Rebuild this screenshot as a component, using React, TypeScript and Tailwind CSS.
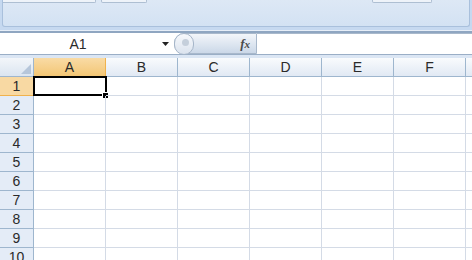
import React from "react";

const cols = ["A", "B", "C", "D", "E", "F", ""];
const rows = [1, 2, 3, 4, 5, 6, 7, 8, 9, 10];

const App = () => {
  return (
    <div className="w-[472px] h-[260px] overflow-hidden bg-white font-['Liberation_Sans',sans-serif] text-[#2a2a2a] flex flex-col">
      {/* ribbon bottom */}
      <div className="h-[30px] shrink-0 bg-[#c6d9f0] flex flex-col">
        <div className="h-[27px] mx-[2px] bg-gradient-to-b from-[#dde8f5] to-[#d3e2f3] border-x border-b border-[#a9c0dc] rounded-b-[3px] flex">
          <div className="w-[93px] h-[3px] border-b border-r border-[#aebfd2] bg-[#eef3f9] rounded-br-[2px]" />
          <div className="w-[46px] ml-[5px] h-[3px] border-b border-x border-[#aebfd2] bg-[#eef3f9] rounded-b-[2px]" />
          <div className="w-[60px] ml-[225px] h-[3px] border-b border-x border-[#aebfd2] bg-[#eef3f9] rounded-b-[2px]" />
        </div>
      </div>
      <div className="h-[1px] shrink-0 bg-[#e6eef8]" />
      <div className="h-[2px] shrink-0 bg-[#8fa6c1]" />
      {/* formula bar */}
      <div className="h-[22px] shrink-0 flex bg-white border-b border-[#9aaec6]">
        <div className="w-[174px] flex items-center relative">
          <span className="w-[156px] text-center text-[14px] leading-none">A1</span>
          <svg width="7" height="4" viewBox="0 0 7 4" className="absolute left-[162px] top-[9px]">
            <path d="M0 0 H7 L3.5 4 Z" fill="#222" />
          </svg>
        </div>
        <div className="w-[83px] flex items-center relative rounded-l-[10px] border border-[#a8b8cb] bg-gradient-to-b from-[#f3f6fa] via-[#dfe7f1] to-[#cbd8e8]">
          <div className="absolute left-[-1px] top-[-1px] w-[20px] h-[22px] rounded-full border border-[#a6b6c9] bg-gradient-to-b from-[#f7f9fc] to-[#dbe3ee]" />
          <div className="absolute left-[7px] top-[5px] w-[7px] h-[7px] rounded-full bg-[#c5cfdb]" />
          <span className="ml-auto mr-[6px] font-['Liberation_Serif',serif] italic font-bold text-[13px] text-[#4a4a4a] leading-none">
            f<span className="text-[11px]">x</span>
          </span>
        </div>
        <div className="flex-1 border-t border-[#a8b8cb]" />
      </div>
      <div className="h-[3px] shrink-0 bg-[#dbe6f4]" />
      {/* header row */}
      <div className="h-[19px] shrink-0 flex">
        <div className="w-[34px] shrink-0 relative border-r border-b border-[#9eb6ce] bg-gradient-to-b from-[#f3f6fa] to-[#dbe5f1]">
          <svg width="10" height="10" viewBox="0 0 10 10" className="absolute right-[2px] bottom-[2px]">
            <path d="M10 0 V10 H0 Z" fill="#b6c6da" />
          </svg>
        </div>
        {cols.map((c, i) => (
          <div
            key={i}
            className={
              c === "A"
                ? "w-[72px] shrink-0 flex items-center justify-center text-[14px] border-r border-b border-[#f0b24d] bg-gradient-to-b from-[#f9dba5] to-[#f3c674]"
                : "w-[72px] shrink-0 flex items-center justify-center text-[14px] border-r border-b border-[#9eb6ce] bg-gradient-to-b from-[#f9fbfd] to-[#e1e9f4]"
            }
          >
            {c}
          </div>
        ))}
      </div>
      {/* grid */}
      {rows.map((r) => (
        <div key={r} className="h-[19px] shrink-0 flex">
          <div
            className={
              r === 1
                ? "w-[34px] shrink-0 flex items-center justify-center text-[14px] border-r border-b border-[#f0b24d] bg-[#f8d9a3]"
                : "w-[34px] shrink-0 flex items-center justify-center text-[14px] border-r border-b border-[#9eb6ce] bg-[#e4ecf7]"
            }
          >
            {r}
          </div>
          {cols.map((c, i) => (
            <div key={i} className="w-[72px] shrink-0 relative border-r border-b border-[#d4dbe6]">
              {r === 1 && c === "A" && (
                <>
                  <div className="absolute left-[-1px] top-[-1px] w-[74px] h-[20px] border-2 border-black" />
                  <div className="absolute right-[-4px] bottom-[-4px] w-[7px] h-[7px] bg-black border border-white" />
                </>
              )}
            </div>
          ))}
        </div>
      ))}
    </div>
  );
};

export default App;
